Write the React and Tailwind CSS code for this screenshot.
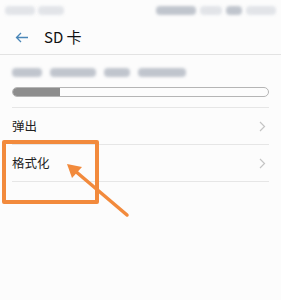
import React from "react";

const Blob = ({ w, h = "h-[9px]", shade = "bg-gray-400" }) => (
  <div className={`${w} ${h} ${shade} rounded-sm blur-[1.5px] opacity-60`} />
);

const Chevron = () => (
  <svg width="7" height="11" viewBox="0 0 7 11" className="shrink-0">
    <path d="M1 1 L5.5 5.5 L1 10" fill="none" stroke="#c4c4c4" strokeWidth="1.2" />
  </svg>
);

const Row = ({ label }) => (
  <div className="flex items-center justify-between h-[37px] border-b border-[#e6e6e6] pr-[3px]">
    <span className="text-[12.5px] text-[#222]">{label}</span>
    <Chevron />
  </div>
);

export default function App() {
  return (
    <div
      className="relative w-[281px] h-[300px] bg-[#fcfcfc] overflow-hidden"
      style={{ fontFamily: '"Noto Sans CJK SC", "Noto Sans", sans-serif' }}
    >
      {/* status bar */}
      <div className="flex items-center justify-between h-[20px] px-[5px]">
        <div className="flex gap-[3px]">
          <Blob w="w-[30px]" shade="bg-gray-300" />
          <Blob w="w-[26px]" shade="bg-gray-300" />
        </div>
        <div className="flex gap-[4px]">
          <Blob w="w-[40px]" />
          <Blob w="w-[22px]" shade="bg-gray-300" />
          <Blob w="w-[16px]" />
          <Blob w="w-[30px]" shade="bg-gray-300" />
        </div>
      </div>

      {/* header */}
      <div className="flex items-center h-[35px] border-b border-[#e3e3e3] px-[15px] gap-[15px]">
        <svg width="14" height="11" viewBox="0 0 14 11">
          <path d="M13 5.5 H1.5 M6 1 L1.5 5.5 L6 10" fill="none" stroke="#4a86b8" strokeWidth="1.3" />
        </svg>
        <span className="text-[15px] text-[#111]">SD 卡</span>
      </div>

      <div className="px-[12px]">
        <div className="flex gap-[8px] items-center h-[32px] pt-[2px]">
          <Blob w="w-[30px]" />
          <Blob w="w-[46px]" />
          <Blob w="w-[26px]" />
          <Blob w="w-[48px]" />
        </div>

        <div className="h-[10px] rounded-full border border-[#b5b5b5] overflow-hidden mb-[10px]">
          <div className="h-full w-[47px] bg-[#8d8d8d]" />
        </div>

        <div className="border-t border-[#e6e6e6]">
          <Row label="弹出" />
          <Row label="格式化" />
        </div>
      </div>

      {/* annotation */}
      <div className="absolute left-[2px] top-[140px] w-[97px] h-[64px] border-[4px] border-[#f28a3c] rounded-[2px]" />
      <svg className="absolute left-0 top-0" width="281" height="300">
        <line x1="127" y1="215" x2="74" y2="170" stroke="#f28a3c" strokeWidth="3.5" strokeLinecap="round" />
        <polygon points="67,164 82,167 72,178" fill="#f28a3c" />
      </svg>
    </div>
  );
}
